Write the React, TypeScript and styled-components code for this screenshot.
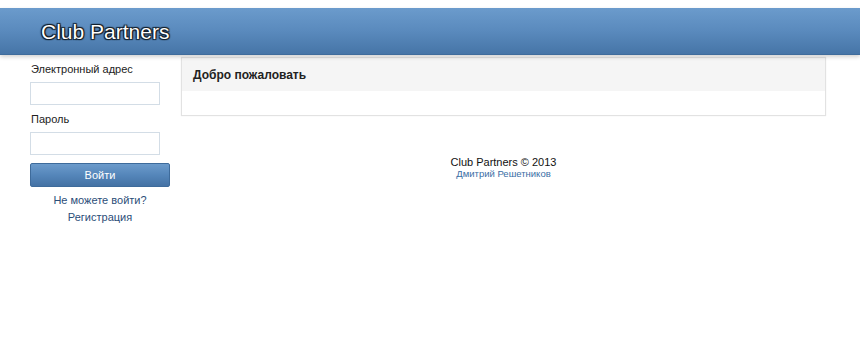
import React from "react";
import styled, { createGlobalStyle } from "styled-components";

const Global = createGlobalStyle`
  html, body { margin: 0; padding: 0; background: #fff; }
  body { padding-top: 8px; font-family: "Liberation Sans", Arial, sans-serif; font-size: 11px; color: #222; }
`;

const Header = styled.header`
  height: 46px;
  background: linear-gradient(to bottom, #6b9bcc 0%, #5a8abd 50%, #4675a7 100%);
  border-bottom: 1px solid #3f6c9c;
  box-shadow: 0 2px 4px rgba(0, 0, 0, 0.18);
  display: flex;
  align-items: center;
  padding-left: 41px;
  position: relative;
  z-index: 1;
`;

const Title = styled.h1`
  margin: 0;
  font-family: "Liberation Sans", Arial, sans-serif;
  font-weight: normal;
  font-size: 21px;
  color: #fff;
  padding-top: 2px;
  text-shadow: 0 0 1px #000, 1px 1px 1px #14212e, -1px -1px 1px #14212e, 1px -1px 1px #14212e, -1px 1px 1px #14212e;
`;

const Body = styled.div`
  display: grid;
  grid-template-columns: 140px 645px;
  column-gap: 11px;
  padding: 0 0 0 30px;
`;

const Sidebar = styled.aside`
  display: flex;
  flex-direction: column;
  padding-top: 8px;
`;

const Label = styled.label`
  display: block;
  padding-left: 1px;
  line-height: 13px;
  margin-bottom: 6px;
`;

const Input = styled.input`
  box-sizing: border-box;
  width: 130px;
  height: 23px;
  border: 1px solid #d3dde6;
  margin: 0 0 8px 0;
  padding: 0 4px;
  font: inherit;
  outline: none;
`;

const Button = styled.button`
  box-sizing: border-box;
  width: 140px;
  height: 24px;
  border: 1px solid #3e6b9b;
  border-radius: 2px;
  background: linear-gradient(to bottom, #6c9bcb 0%, #5586ba 50%, #4472a4 100%);
  color: #fff;
  font-family: "Liberation Sans", Arial, sans-serif;
  font-size: 11px;
  cursor: pointer;
`;

const Links = styled.div`
  display: flex;
  flex-direction: column;
  align-items: center;
  margin-top: 7px;
  gap: 4px;
`;

const LinkA = styled.a`
  color: #2b4d78;
  text-decoration: none;
  line-height: 13px;
`;

const Main = styled.main`
  padding-top: 2px;
`;

const Panel = styled.section`
  border: 1px solid #e2e2e2;
  box-shadow: 0 0 1px #e4e4e4;
  background: #fff;
`;

const PanelHead = styled.div`
  background: #f5f5f5;
  height: 33px;
  display: flex;
  align-items: center;
  padding-left: 11px;
  font-weight: bold;
  font-size: 12px;
  color: #222;
`;

const PanelBody = styled.div`
  height: 24px;
`;

const Footer = styled.footer`
  text-align: center;
  margin-top: 40px;
  line-height: 12px;
`;

const Copy = styled.div`
  font-size: 11px;
  color: #111;
`;

const Author = styled.a`
  display: block;
  font-size: 9.5px;
  color: #3a6ea5;
  text-decoration: none;
`;

export default function App() {
  return (
    <>
      <Global />
      <Header>
        <Title>Club Partners</Title>
      </Header>
      <Body>
        <Sidebar>
          <Label>Электронный адрес</Label>
          <Input type="text" />
          <Label>Пароль</Label>
          <Input type="password" />
          <Button>Войти</Button>
          <Links>
            <LinkA href="#">Не можете войти?</LinkA>
            <LinkA href="#">Регистрация</LinkA>
          </Links>
        </Sidebar>
        <Main>
          <Panel>
            <PanelHead>Добро пожаловать</PanelHead>
            <PanelBody />
          </Panel>
          <Footer>
            <Copy>Club Partners © 2013</Copy>
            <Author href="#">Дмитрий Решетников</Author>
          </Footer>
        </Main>
      </Body>
    </>
  );
}
